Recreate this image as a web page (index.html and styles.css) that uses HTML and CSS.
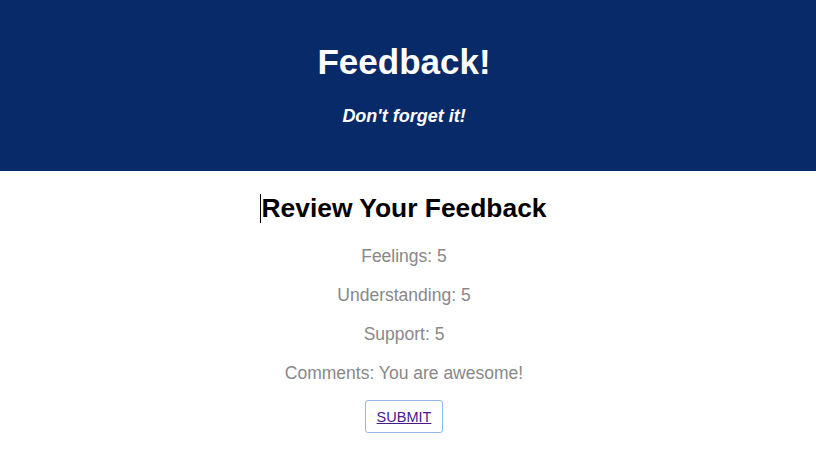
FILE: index.html
```html
<!DOCTYPE html>
<html>
<head>
<meta charset="utf-8">
<link rel="stylesheet" href="styles.css">
</head>
<body>
<header class="app-header">
  <h1 class="app-title">Feedback!</h1>
  <h4 class="app-subtitle">Don't forget it!</h4>
</header>
<main class="review">
  <h2 class="review-title"><span class="caret"></span>Review Your Feedback</h2>
  <p class="review-line">Feelings: 5</p>
  <p class="review-line">Understanding: 5</p>
  <p class="review-line">Support: 5</p>
  <p class="review-line">Comments: You are awesome!</p>
  <button class="submit-btn"><span class="submit-text">SUBMIT</span></button>
</main>
</body>
</html>
```
FILE: styles.css
```css
html, body {
  margin: 0;
  padding: 0;
  background: #ffffff;
  font-family: "Liberation Sans", Arial, Helvetica, sans-serif;
}
.app-header {
  background: #092a69;
  height: 171px;
  padding-right: 8px;
  display: flex;
  flex-direction: column;
  align-items: center;
  color: #ffffff;
}
.app-title {
  margin: 42px 0 0 0;
  font-size: 35px;
  font-weight: bold;
  line-height: 40px;
}
.app-subtitle {
  margin: 24px 0 0 0;
  font-size: 18px;
  font-style: italic;
  font-weight: bold;
  line-height: 20px;
}
.review {
  padding-right: 8px;
  display: flex;
  flex-direction: column;
  align-items: center;
}
.review-title {
  position: relative;
  margin: 22px 0 14px 0;
  font-size: 26.4px;
  font-weight: bold;
  line-height: 30px;
  color: #000;
}
.caret {
  position: absolute;
  left: -1px;
  top: 1px;
  width: 1px;
  height: 29px;
  background: #000;
}
.review-line {
  margin: 0;
  font-size: 17.5px;
  line-height: 39px;
  color: #888888;
}
.submit-btn {
  margin-top: 7px;
  background: #fff;
  border: 1px solid #90b8e8;
  border-radius: 3px;
  padding: 0 11px;
  height: 33px;
  font-family: "Liberation Sans", Arial, sans-serif;
  font-size: 14.5px;
}
.submit-text {
  color: #4a1a8a;
  text-decoration: underline;
}
```
